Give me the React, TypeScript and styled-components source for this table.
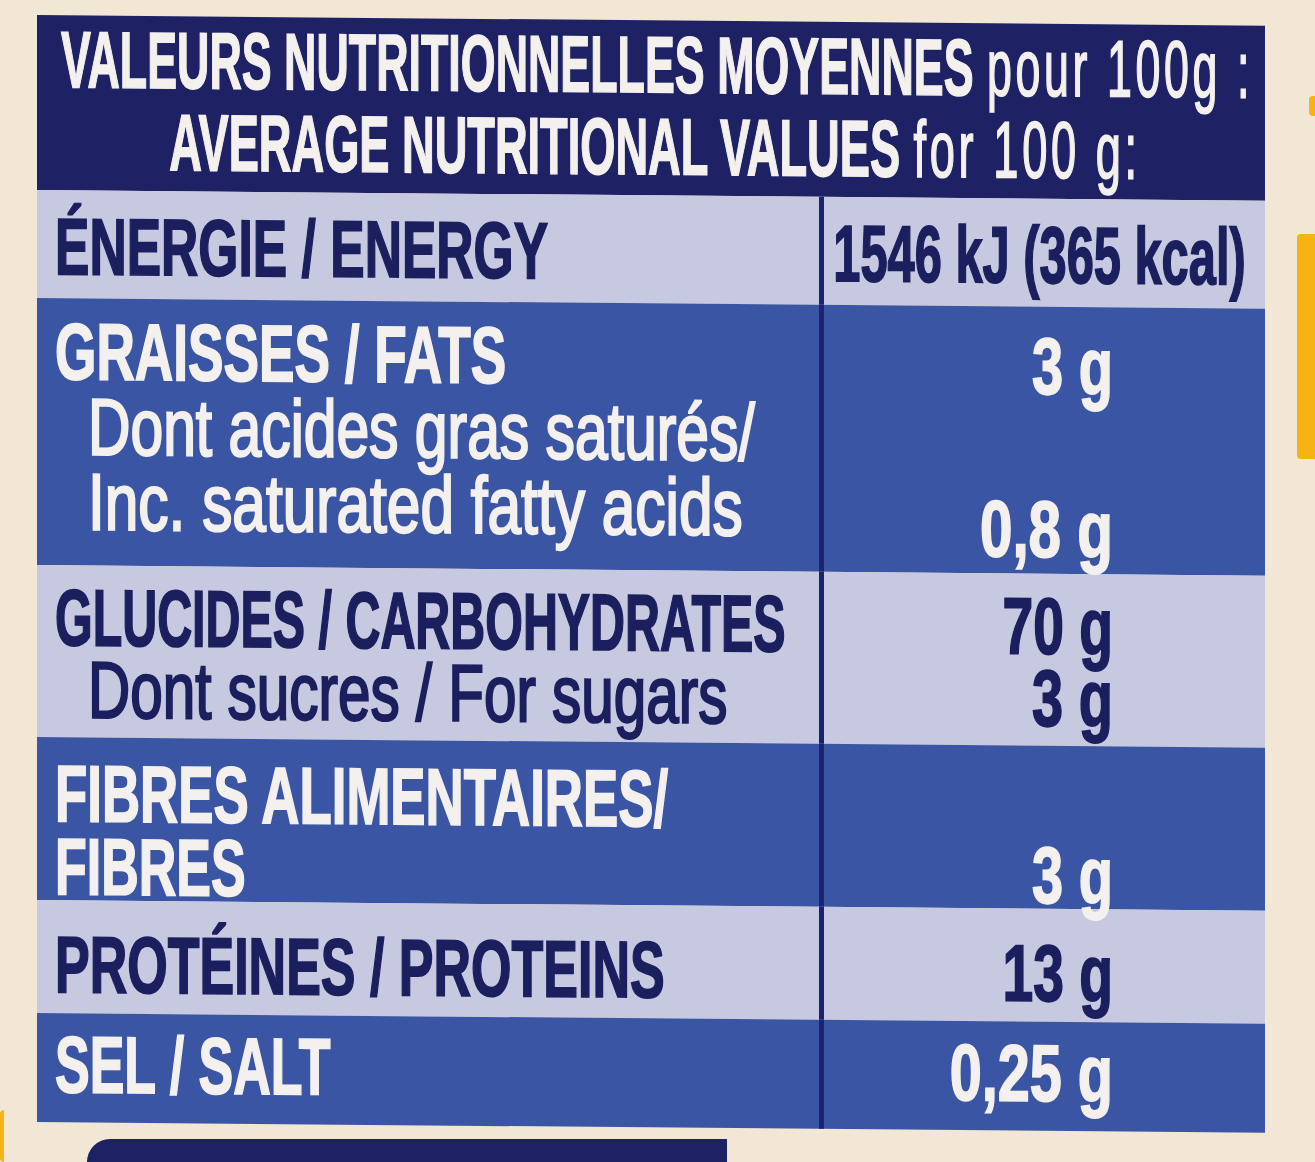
import React from "react";
import styled, { createGlobalStyle } from "styled-components";

const CREAM = "#f2e7d5";
const NAVY = "#1e2164";
const LIGHT = "#c6c9e0";
const BLUE = "#3b55a5";
const INK = "#1b1f5e";
const PAPER = "#f3f0ee";

type Tone = "light" | "blue";
type Align = "left" | "center" | "right";

const GlobalStyle = createGlobalStyle`
  html, body {
    margin: 0;
    padding: 0;
    background: ${CREAM};
  }
  body {
    font-family: "Liberation Sans", Arial, sans-serif;
    overflow: hidden;
  }
`;

const Page = styled.div`
  width: 1315px;
  height: 1162px;
  display: flex;
  background: ${CREAM};
  overflow: hidden;
`;

const LeftEdge = styled.div`
  width: 37px;
  flex-shrink: 0;
  display: flex;
  flex-direction: column;
  justify-content: flex-end;
`;

const RightEdge = styled.div`
  flex: 1;
  display: flex;
  flex-direction: column;
  align-items: flex-end;
`;

const Blob = styled.div<{ $w: number; $h: number; $top: number }>`
  width: ${(p) => p.$w}px;
  height: ${(p) => p.$h}px;
  margin-top: ${(p) => p.$top}px;
  background: #f5b414;
  border-radius: 4px 0 0 4px;
`;

const Column = styled.div`
  width: 1228px;
  flex-shrink: 0;
  padding-top: 15px;
  display: flex;
  flex-direction: column;
`;

const Label = styled.div`
  display: flex;
  flex-direction: column;
  transform: skewY(0.5deg);
  transform-origin: 0 0;
`;

const Header = styled.div`
  height: 175px;
  box-sizing: border-box;
  padding: 4px 10px 7px;
  display: flex;
  flex-direction: column;
  background: ${NAVY};
  color: ${PAPER};
`;

const HeaderLine = styled.div<{ $sx: number; $dx?: number }>`
  display: flex;
  justify-content: center;
  font-size: 80px;
  line-height: 82px;
  height: 82px;
  white-space: nowrap;
  transform: translateX(${(p) => p.$dx ?? 0}px) scaleX(${(p) => p.$sx});
`;

const Strong = styled.span`
  font-weight: 700;
  -webkit-text-stroke: 1.6px currentColor;
`;

const Soft = styled.span`
  font-weight: 400;
  letter-spacing: 0.08em;
  margin-left: 0.3em;
  -webkit-text-stroke: 1.8px currentColor;
`;

const Row = styled.div<{ $tone: Tone; $h: number }>`
  display: flex;
  height: ${(p) => p.$h}px;
  background: ${(p) => (p.$tone === "light" ? LIGHT : BLUE)};
  color: ${(p) => (p.$tone === "light" ? INK : PAPER)};
`;

const LabelCell = styled.div<{ $pad: number }>`
  width: 782px;
  flex-shrink: 0;
  box-sizing: border-box;
  padding: ${(p) => p.$pad}px 0 0 18px;
  display: flex;
  flex-direction: column;
`;

const ValueCell = styled.div<{ $pad: number; $center?: boolean }>`
  flex: 1;
  min-width: 0;
  border-left: 5px solid #1b2270;
  padding: ${(p) => p.$pad}px ${(p) => (p.$center ? 10 : 152)}px 0 0;
  display: flex;
  flex-direction: column;
`;

const Text = styled.div<{
  $sx: number;
  $align: Align;
  $lh: number;
  $sub?: boolean;
  $shift?: number;
}>`
  display: flex;
  justify-content: ${(p) =>
    p.$align === "left" ? "flex-start" : p.$align === "right" ? "flex-end" : "center"};
  height: ${(p) => p.$lh}px;
  line-height: ${(p) => p.$lh}px;
  margin-left: ${(p) => (p.$sub ? 33 : 0)}px;
  font-size: 80px;
  font-weight: ${(p) => (p.$sub ? 400 : 700)};
  -webkit-text-stroke: ${(p) => (p.$sub ? 2.4 : 1.8)}px currentColor;
  white-space: nowrap;
  transform: translateY(${(p) => p.$shift ?? 0}px) scaleX(${(p) => p.$sx});
  transform-origin: ${(p) => p.$align} center;
`;

const BottomTab = styled.div`
  width: 640px;
  height: 44px;
  margin: 17px 0 0 50px;
  background: ${NAVY};
  border-radius: 36px 0 0 0;
`;

type Line = { text: string; sx: number; sub?: boolean };
type Val = { text: string; sx: number; shift?: number } | null;

type RowData = {
  tone: Tone;
  h: number;
  pad: number;
  lh: number;
  lines: Line[];
  values: Val[];
  center?: boolean;
};

const rows: RowData[] = [
  {
    tone: "light",
    h: 108,
    pad: 19,
    lh: 75,
    center: true,
    lines: [{ text: "ÉNERGIE / ENERGY", sx: 0.645 }],
    values: [{ text: "1546 kJ (365 kcal)", sx: 0.61 }],
  },
  {
    tone: "blue",
    h: 267,
    pad: 16,
    lh: 75,
    lines: [
      { text: "GRAISSES / FATS", sx: 0.665 },
      { text: "Dont acides gras saturés/", sx: 0.735, sub: true },
      { text: "Inc. saturated fatty acids", sx: 0.755, sub: true },
    ],
    values: [{ text: "3 g", sx: 0.7, shift: 6 }, null, { text: "0,8 g", sx: 0.73, shift: 19 }],
  },
  {
    tone: "light",
    h: 172,
    pad: 17,
    lh: 72,
    lines: [
      { text: "GLUCIDES / CARBOHYDRATES", sx: 0.605 },
      { text: "Dont sucres / For sugars", sx: 0.73, sub: true },
    ],
    values: [
      { text: "70 g", sx: 0.69 },
      { text: "3 g", sx: 0.7 },
    ],
  },
  {
    tone: "blue",
    h: 163,
    pad: 20,
    lh: 73,
    lines: [
      { text: "FIBRES ALIMENTAIRES/", sx: 0.66 },
      { text: "FIBRES", sx: 0.65 },
    ],
    values: [null, { text: "3 g", sx: 0.7 }],
  },
  {
    tone: "light",
    h: 113,
    pad: 27,
    lh: 75,
    lines: [{ text: "PROTÉINES / PROTEINS", sx: 0.65 }],
    values: [{ text: "13 g", sx: 0.69 }],
  },
  {
    tone: "blue",
    h: 109,
    pad: 14,
    lh: 75,
    lines: [{ text: "SEL / SALT", sx: 0.65 }],
    values: [{ text: "0,25 g", sx: 0.72 }],
  },
];

const NutritionRow = ({ row }: { row: RowData }) => (
  <Row $tone={row.tone} $h={row.h}>
    <LabelCell $pad={row.pad}>
      {row.lines.map((line) => (
        <Text key={line.text} $sx={line.sx} $align="left" $lh={row.lh} $sub={line.sub}>
          {line.text}
        </Text>
      ))}
    </LabelCell>
    <ValueCell $pad={row.pad} $center={row.center}>
      {row.values.map((v, i) => (
        <Text
          key={i}
          $sx={v ? v.sx : 1}
          $align={row.center ? "center" : "right"}
          $lh={row.lh}
          $shift={v?.shift}
        >
          {v ? v.text : "\u00a0"}
        </Text>
      ))}
    </ValueCell>
  </Row>
);

const App = () => (
  <>
    <GlobalStyle />
    <Page>
      <LeftEdge>
        <Blob $w={4} $h={52} $top={0} />
      </LeftEdge>
      <Column>
        <Label>
          <Header>
            <HeaderLine $sx={0.56} $dx={6}>
              <Strong>VALEURS NUTRITIONNELLES MOYENNES</Strong>
              <Soft>pour 100g :</Soft>
            </HeaderLine>
            <HeaderLine $sx={0.565} $dx={4}>
              <Strong>AVERAGE NUTRITIONAL VALUES</Strong>
              <Soft>for 100 g:</Soft>
            </HeaderLine>
          </Header>
          {rows.map((row) => (
            <NutritionRow key={row.lines[0].text} row={row} />
          ))}
        </Label>
        <BottomTab />
      </Column>
      <RightEdge>
        <Blob $w={6} $h={20} $top={96} />
        <Blob $w={18} $h={225} $top={118} />
      </RightEdge>
    </Page>
  </>
);

export default App;
